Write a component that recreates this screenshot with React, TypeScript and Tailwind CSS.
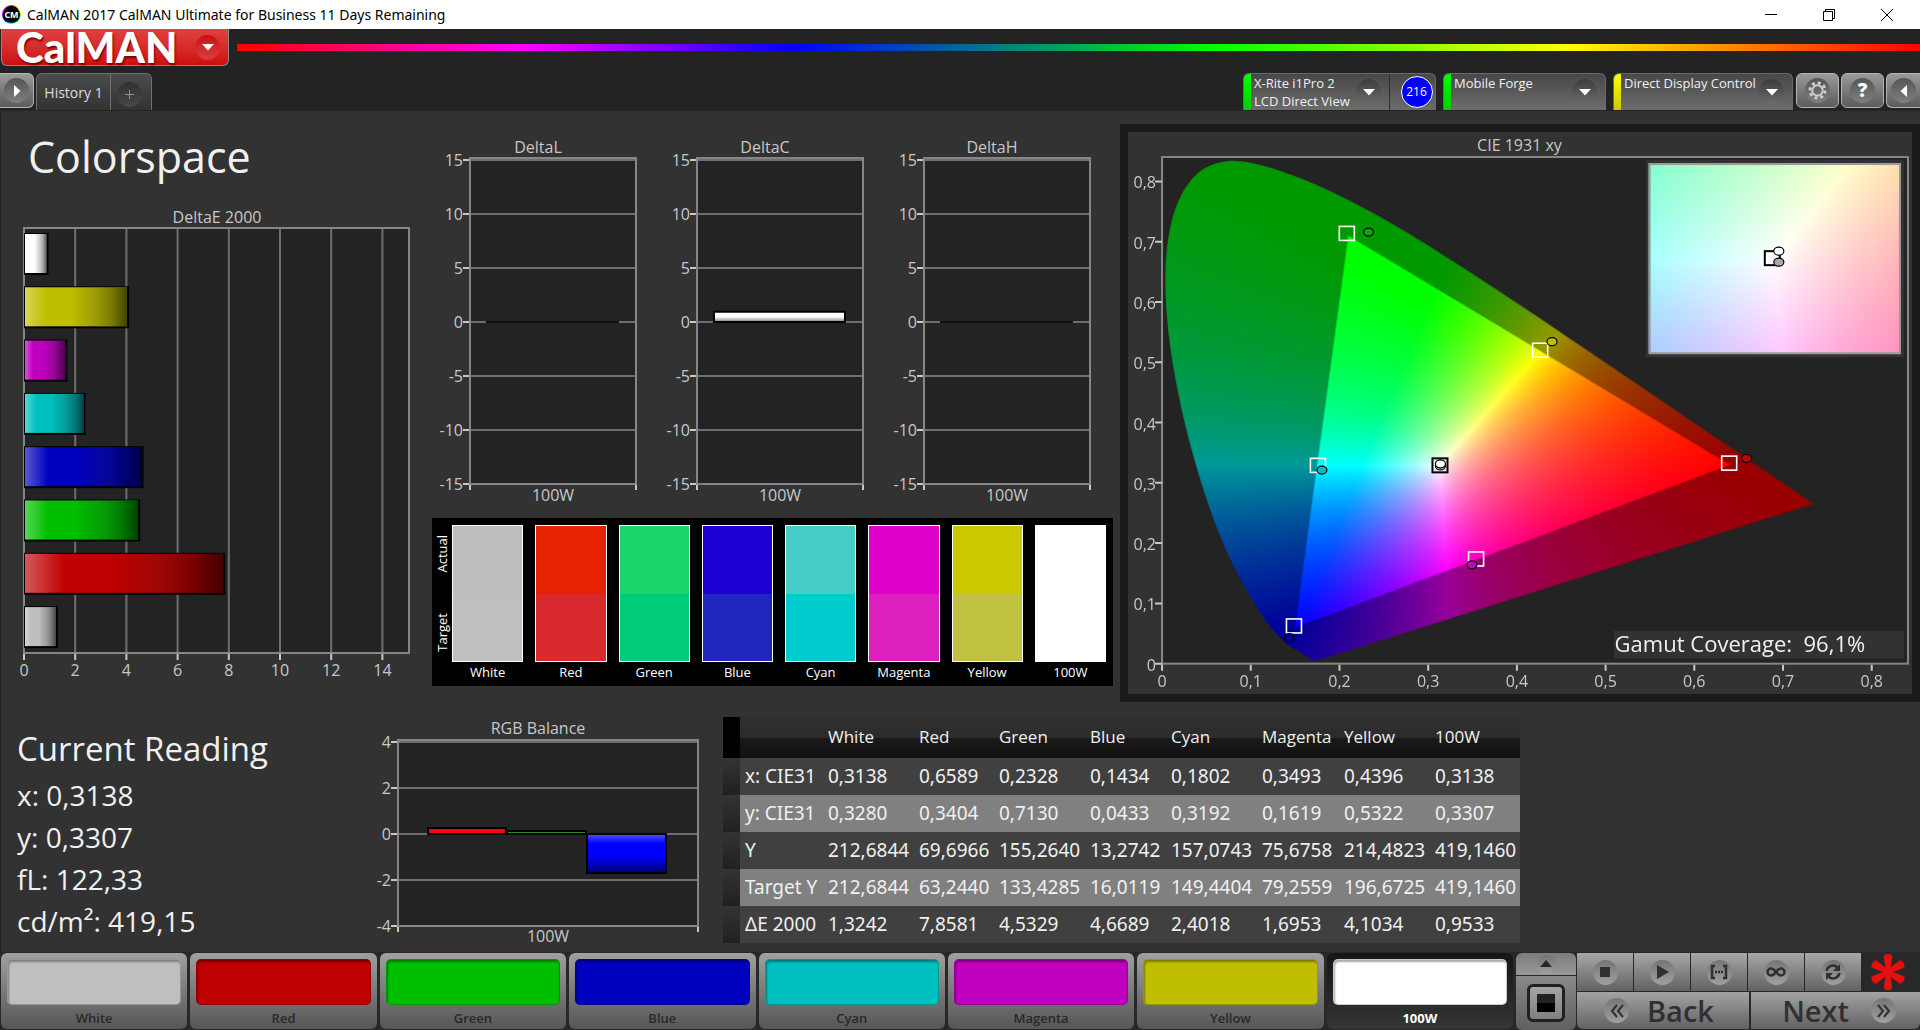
import { useEffect, useRef } from "react";
import type { ReactNode } from "react";

type Point = [number, number];

const PATCHES = [
  { name: "White", base: "#bfbfbf", actual: "#bfbdbe", target: "#bfbfbf", deltaE: 1.3242 },
  { name: "Red", base: "#bf0000", actual: "#e62200", target: "#d82830", deltaE: 7.8581 },
  { name: "Green", base: "#00bf00", actual: "#1bd76b", target: "#00cc7a", deltaE: 4.5329 },
  { name: "Blue", base: "#0000bf", actual: "#1c00d2", target: "#2126bf", deltaE: 4.6689 },
  { name: "Cyan", base: "#00bfbf", actual: "#46cdc8", target: "#00cccd", deltaE: 2.4018 },
  { name: "Magenta", base: "#bf00bf", actual: "#dc00c8", target: "#dc20c0", deltaE: 1.6953 },
  { name: "Yellow", base: "#bfbf00", actual: "#cbc800", target: "#c1c141", deltaE: 4.1034 },
  { name: "100W", base: "#ffffff", actual: "#ffffff", target: "#ffffff", deltaE: 0.9533 },
];

const ROWS = [
  ["x: CIE31", "0,3138", "0,6589", "0,2328", "0,1434", "0,1802", "0,3493", "0,4396", "0,3138"],
  ["y: CIE31", "0,3280", "0,3404", "0,7130", "0,0433", "0,3192", "0,1619", "0,5322", "0,3307"],
  ["Y", "212,6844", "69,6966", "155,2640", "13,2742", "157,0743", "75,6758", "214,4823", "419,1460"],
  ["Target Y", "212,6844", "63,2440", "133,4285", "16,0119", "149,4404", "79,2559", "196,6725", "419,1460"],
  ["ΔE 2000", "1,3242", "7,8581", "4,5329", "4,6689", "2,4018", "1,6953", "4,1034", "0,9533"],
];

const COL_WIDTHS = [17, 83, 91, 80, 91, 81, 91, 82, 91, 90];

/* ---------- chromaticity helpers ---------- */

const LOCUS: Point[] = [
  [0.1741, 0.005], [0.1714, 0.0051], [0.1689, 0.0069], [0.1644, 0.0109], [0.1566, 0.0177],
  [0.144, 0.0297], [0.1355, 0.0399], [0.1241, 0.0578], [0.1096, 0.0868], [0.0913, 0.1327],
  [0.0687, 0.2007], [0.0454, 0.295], [0.0235, 0.4127], [0.0082, 0.5384], [0.0039, 0.6548],
  [0.0139, 0.7502], [0.0389, 0.812], [0.0743, 0.8338], [0.1142, 0.8262], [0.1547, 0.8059],
  [0.1929, 0.7816], [0.2296, 0.7543], [0.2658, 0.7243], [0.3016, 0.6923], [0.3731, 0.6245],
  [0.4441, 0.5547], [0.5125, 0.4866], [0.5752, 0.4242], [0.627, 0.3725], [0.6658, 0.334],
  [0.6915, 0.3083], [0.719, 0.2809], [0.7347, 0.2653],
];

const GAMUT: Point[] = [[0.64, 0.33], [0.21, 0.71], [0.15, 0.06]];

const CIE_W = 783;
const CIE_H = 561;
const cx = (x: number) => 34 + x * 886;
const cy = (y: number) => 531 - y * 602;

// linear sRGB, brightest channel scaled to full
function xyToRgb(x: number, y: number) {
  const X = x / y;
  const Z = (1 - x - y) / y;
  const lin = [
    3.24045 * X - 1.53714 - 0.49853 * Z,
    -0.96927 * X + 1.87601 + 0.04156 * Z,
    0.05564 * X - 0.20403 + 1.05723 * Z,
  ].map((v) => Math.max(v, 0));
  const peak = Math.max(...lin);
  return lin.map((v) => (255 * v) / peak);
}

// signed distance in pixels to the nearest gamut edge, positive inside
function gamutDistance(px: number, py: number) {
  let d = Infinity;
  for (let i = 0; i < 3; i++) {
    const [ax, ay] = [cx(GAMUT[i][0]), cy(GAMUT[i][1])];
    const [bx, by] = [cx(GAMUT[(i + 1) % 3][0]), cy(GAMUT[(i + 1) % 3][1])];
    const len = Math.hypot(bx - ax, by - ay);
    d = Math.min(d, ((by - ay) * (px - ax) - (bx - ax) * (py - ay)) / len);
  }
  return d;
}

function ColorField({ width, height, paint, clip }: {
  width: number;
  height: number;
  paint: (px: number, py: number) => number[];
  clip?: string;
}) {
  const ref = useRef<HTMLCanvasElement>(null);

  useEffect(() => {
    const ctx = ref.current?.getContext("2d");
    if (!ctx) return;
    const img = ctx.createImageData(width, height);
    for (let j = 0; j < height; j++) {
      for (let i = 0; i < width; i++) {
        const [r, g, b] = paint(i + 0.5, j + 0.5);
        img.data.set([r, g, b, 255], (j * width + i) * 4);
      }
    }
    ctx.putImageData(img, 0, 0);
    if (clip) {
      ctx.globalCompositeOperation = "destination-in";
      ctx.fill(new Path2D(clip));
    }
  }, [width, height, paint, clip]);

  return <canvas ref={ref} width={width} height={height} className="block h-full w-full" />;
}

function paintDiagram(px: number, py: number) {
  const x = (px - 34) / 886;
  const y = Math.max((531 - py) / 602, 0.001);
  const k = 0.6 + 0.4 * Math.min(Math.max(gamutDistance(px, py) + 0.5, 0), 1);
  return xyToRgb(x, y).map((v) => v * k);
}

function paintInset(px: number, py: number) {
  const x = 0.3127 + ((px - 126) / 125) * 0.025;
  const y = 0.329 - ((py - 95) / 95) * 0.025;
  return xyToRgb(x, y);
}

// Catmull-Rom spline through the spectral locus
function locusPath() {
  const p = LOCUS.map(([x, y]): Point => [cx(x), cy(y)]);
  let d = `M${p[0]}`;
  for (let i = 0; i < p.length - 1; i++) {
    const a = p[i - 1] ?? p[i];
    const b = p[i];
    const c = p[i + 1];
    const e = p[i + 2] ?? c;
    d += `C${b[0] + (c[0] - a[0]) / 6},${b[1] + (c[1] - a[1]) / 6} ${c[0] - (e[0] - b[0]) / 6},${c[1] - (e[1] - b[1]) / 6} ${c[0]},${c[1]}`;
  }
  return d + "Z";
}

const LOCUS_PATH = locusPath();

/* ---------- charts ---------- */

function DeltaEChart() {
  const bars = [...PATCHES].reverse();
  return (
    <svg viewBox="0 0 425 490" className="block w-full text-[16px]" role="img" aria-label="DeltaE 2000">
      <defs>
        <linearGradient id="shadeH">
          <stop offset="0" stopColor="#fff" stopOpacity="0.35" />
          <stop offset="0.2" stopColor="#fff" stopOpacity="0" />
          <stop offset="0.45" stopColor="#000" stopOpacity="0" />
          <stop offset="0.65" stopColor="#222" stopOpacity="0.18" />
          <stop offset="0.85" stopColor="#000" stopOpacity="0.36" />
          <stop offset="1" stopColor="#000" stopOpacity="0.65" />
        </linearGradient>
      </defs>
      <text x="217" y="23" textAnchor="middle" className="fill-[#c8c8c8]">DeltaE 2000</text>
      <rect x="24" y="28" width="385" height="425" fill="#232323" />
      {[2, 4, 6, 8, 10, 12, 14].map((n) => (
        <path key={n} d={`M${24 + n * 25.6} 28V453`} stroke="#6e6e6e" strokeWidth="2" />
      ))}
      <rect x="24" y="28" width="385" height="425" fill="none" stroke="#868686" strokeWidth="2" />
      {bars.map((bar, i) => (
        <g key={bar.name}>
          <rect x="24" y={33 + i * 53.3} width={bar.deltaE * 25.6} height="42" fill="#000" />
          <rect x="25" y={34 + i * 53.3} width={bar.deltaE * 25.6 - 3} height="39" fill={bar.base} />
          <rect x="25" y={34 + i * 53.3} width={bar.deltaE * 25.6 - 3} height="39" fill="url(#shadeH)" />
        </g>
      ))}
      {[0, 2, 4, 6, 8, 10, 12, 14].map((n) => (
        <g key={n}>
          <path d={`M${24 + n * 25.6} 454v6`} stroke="#c8c8c8" strokeWidth="2" />
          <text x={24 + n * 25.6} y="476" textAnchor="middle" className="fill-[#c8c8c8]">{n}</text>
        </g>
      ))}
    </svg>
  );
}

function DeltaChart({ title, value }: { title: string; value: number }) {
  const zero = 192;
  return (
    <svg viewBox="0 0 227 380" className="block min-w-0 flex-1 text-[16px]" role="img" aria-label={title}>
      <defs>
        <linearGradient id="shadeV" x2="0" y2="1">
          <stop offset="0" stopColor="#fff" />
          <stop offset="0.5" stopColor="#fff" />
          <stop offset="1" stopColor="#777" />
        </linearGradient>
      </defs>
      <text x="113" y="23" textAnchor="middle" className="fill-[#c8c8c8]">{title}</text>
      <rect x="45" y="28" width="166" height="326" fill="#232323" />
      {[15, 10, 5, 0, -5, -10, -15].map((n) => (
        <g key={n}>
          <path d={`M45 ${zero - n * 10.8}H211`} stroke="#6e6e6e" strokeWidth="2" />
          <path d={`M38 ${zero - n * 10.8}h7`} stroke="#c8c8c8" strokeWidth="2" />
          <text x="38" y={zero - n * 10.8 + 6} textAnchor="end" className="fill-[#c8c8c8]">{n}</text>
        </g>
      ))}
      <rect x="45" y="28" width="166" height="326" fill="none" stroke="#868686" strokeWidth="2" />
      <path d="M45 355v5M211 355v5" stroke="#c8c8c8" strokeWidth="2" />
      {value > 0 ? (
        <rect x="62" y={zero - value * 10.8} width="131" height={value * 10.8} fill="url(#shadeV)" stroke="#000" strokeWidth="2" />
      ) : (
        <path d={`M61 ${zero}h133`} stroke="#111" strokeWidth="2" />
      )}
      <text x="128" y="371" textAnchor="middle" className="fill-[#c8c8c8]">100W</text>
    </svg>
  );
}

function RgbBalanceChart() {
  return (
    <svg viewBox="0 0 340 234" className="block w-full text-[16px]" role="img" aria-label="RGB Balance">
      <defs>
        <linearGradient id="shadeBlue" x2="0" y2="1">
          <stop offset="0" stopColor="#5050ff" />
          <stop offset="0.25" stopColor="#0000ff" />
          <stop offset="0.55" stopColor="#0000ff" />
          <stop offset="1" stopColor="#000078" />
        </linearGradient>
      </defs>
      <text x="168" y="18" textAnchor="middle" className="fill-[#c8c8c8]">RGB Balance</text>
      <rect x="28" y="24" width="300" height="186" fill="#232323" />
      {[4, 2, 0, -2, -4].map((n) => (
        <g key={n}>
          <path d={`M28 ${118 - n * 23}H328`} stroke="#6e6e6e" strokeWidth="2" />
          <path d={`M21 ${118 - n * 23}h7`} stroke="#c8c8c8" strokeWidth="2" />
          <text x="21" y={118 - n * 23 + 6} textAnchor="end" className="fill-[#c8c8c8]">{n}</text>
        </g>
      ))}
      <rect x="28" y="24" width="300" height="186" fill="none" stroke="#868686" strokeWidth="2" />
      <path d="M28 211v5M328 211v5" stroke="#c8c8c8" strokeWidth="2" />
      <rect x="58" y="112" width="78" height="6" fill="#ee0a0a" stroke="#000" strokeWidth="2" />
      <rect x="137" y="115" width="79" height="3" fill="#2a8a2a" stroke="#000" strokeWidth="2" />
      <rect x="217" y="118" width="79" height="39" fill="url(#shadeBlue)" stroke="#000" strokeWidth="2" />
      <text x="178" y="226" textAnchor="middle" className="fill-[#c8c8c8]">100W</text>
    </svg>
  );
}

const TARGETS: Point[] = [
  [0.2083, 0.7138], [0.1757, 0.329], [0.354, 0.1737], [0.1487, 0.0626], [0.4262, 0.52], [0.6393, 0.3327],
];

const MEASURED: [number, number, string][] = [
  [0.6589, 0.3404, "#bf0000"], [0.2328, 0.716, "#00a800"], [0.1434, 0.0433, "#0000a0"],
  [0.1802, 0.3212, "#00bfbf"], [0.3493, 0.1639, "#bf00bf"], [0.4396, 0.5342, "#bfbf00"],
  [0.3138, 0.328, "#bfbfbf"], [0.3138, 0.3315, "#ffffff"],
];

const TICKS = [0, 1, 2, 3, 4, 5, 6, 7, 8];

function CieChart() {
  return (
    <svg viewBox={`0 0 ${CIE_W} ${CIE_H}`} className="block w-full text-[16px]" role="img" aria-label="CIE 1931 xy">
      <text x="391" y="19" textAnchor="middle" className="fill-[#c8c8c8]">CIE 1931 xy</text>
      <rect x="34" y="25" width="745" height="506" fill="#232323" />
      <foreignObject x="0" y="0" width={CIE_W} height={CIE_H}>
        <ColorField width={CIE_W} height={CIE_H} paint={paintDiagram} clip={LOCUS_PATH} />
      </foreignObject>
      <rect x="34" y="25" width="745" height="506" fill="none" stroke="#868686" strokeWidth="2" />
      {TICKS.map((n) => (
        <g key={n}>
          <path d={`M${cx(n / 10)} 532v6M27 ${cy(n / 10)}h7`} stroke="#c8c8c8" strokeWidth="2" />
          <text x={cx(n / 10)} y="554" textAnchor="middle" className="fill-[#c8c8c8]">{n ? `0,${n}` : "0"}</text>
          <text x="28" y={cy(n / 10) + 7} textAnchor="end" className="fill-[#c8c8c8]">{n ? `0,${n}` : "0"}</text>
        </g>
      ))}
      {TARGETS.map(([x, y]) => (
        <rect key={x} x={cx(x) - 7.5} y={cy(y) - 7} width="15" height="14" fill="none" stroke="#fff" strokeWidth="1.6" />
      ))}
      <rect x={cx(0.3133) - 7.5} y={cy(0.329) - 7} width="15" height="14" fill="none" stroke="#000" strokeWidth="2" />
      {MEASURED.map(([x, y, fill]) => (
        <ellipse key={`${x}${fill}`} cx={cx(x)} cy={cy(y)} rx="5" ry="4" fill={fill} stroke="#000" strokeWidth="1.2" />
      ))}

      {/* zoomed view around the white point */}
      <rect x="517" y="28" width="258" height="197" fill="#323232" />
      <foreignObject x="520" y="31" width="252" height="190">
        <ColorField width={252} height={190} paint={paintInset} />
      </foreignObject>
      <rect x="521" y="32" width="250" height="189" fill="none" stroke="#999" strokeWidth="2" />
      <rect x="636" y="119" width="15" height="14" fill="none" stroke="#000" strokeWidth="2" />
      <ellipse cx="650" cy="130" rx="5" ry="4" fill="#a8a8a8" stroke="#000" strokeWidth="1.2" />
      <ellipse cx="650" cy="119" rx="5" ry="4" fill="#fff" stroke="#000" strokeWidth="1.2" />

      <rect x="485" y="498" width="290" height="28" fill="#323232" />
      <text x="486" y="519" xmlSpace="preserve" className="fill-[#f0f0f0] text-[22px]">Gamut Coverage:  96,1%</text>
    </svg>
  );
}

/* ---------- chrome ---------- */

function RoundGlyph({ children, className = "" }: { children: ReactNode; className?: string }) {
  return (
    <span className={`flex h-[25px] w-[25px] shrink-0 items-center justify-center rounded-full ${className}`}>
      {children}
    </span>
  );
}

function Arrow({ d }: { d: string }) {
  return (
    <svg viewBox="0 0 12 12" className="h-3 w-3 fill-white">
      <path d={d} />
    </svg>
  );
}

const DOWN = "M0 3H12L6 9.500Z";
const RIGHT = "M3 0V12L9.500 6Z";
const LEFT = "M9 0V12L2.500 6Z";

function DeviceTab({ lines, accent, width, badge }: { lines: string[]; accent: string; width: string; badge?: string }) {
  return (
    <div className={`flex h-[37px] overflow-hidden rounded-t-md border border-b-0 border-[#6a6a6a] bg-gradient-to-b from-[#484848] to-[#6c6c6c] ${width}`}>
      <div className={`w-[7px] shrink-0 ${accent}`} />
      <button type="button" className="flex min-w-0 flex-1 items-start pr-2 pl-[3px] text-left text-[13px] leading-[18px] whitespace-nowrap text-[#f0f0f0]">
        <span className="w-0 flex-1">
          {lines.map((line) => (
            <span key={line} className="block">{line}</span>
          ))}
        </span>
        <RoundGlyph className="mt-[5px] bg-gradient-to-b from-[#3c3c3c] to-[#6c6c6c]">
          <Arrow d={DOWN} />
        </RoundGlyph>
      </button>
      {badge && (
        <div className="flex w-[46px] items-center justify-center border-l border-[#303030] pl-2">
          <span className="flex h-8 w-8 items-center justify-center rounded-full border border-white bg-[#0000ff] text-[12px] text-white">
            {badge}
          </span>
        </div>
      )}
    </div>
  );
}

function SquareButton({ label, children, className = "" }: { label: string; children: ReactNode; className?: string }) {
  return (
    <button type="button" aria-label={label} className={`flex h-[35px] items-center justify-center rounded-md border border-[#b4b4b4] bg-gradient-to-b from-[#9a9a9a] to-[#5c5c5c] ${className}`}>
      <RoundGlyph className="bg-gradient-to-b from-[#555] to-[#808080]">{children}</RoundGlyph>
    </button>
  );
}

function TitleBar() {
  return (
    <div className="flex h-[29px] items-center bg-white pr-1 text-black">
      <span className="ml-[2px] flex h-[19px] w-[19px] items-center justify-center rounded-full bg-[conic-gradient(red,yellow,lime,cyan,blue,magenta,red)] p-px">
        <span className="flex h-full w-full items-center justify-center rounded-full bg-black text-[9px] font-bold text-white">CM</span>
      </span>
      <h1 className="ml-[6px] flex-1 font-['Noto_Sans',sans-serif] text-[14px]">
        CalMAN 2017 CalMAN Ultimate for Business 11 Days Remaining
      </h1>
      <button type="button" aria-label="Minimize" className="flex w-[58px] justify-center">
        <svg viewBox="0 0 12 12" className="h-3 w-3" stroke="#000"><path d="M0 5.500H12" /></svg>
      </button>
      <button type="button" aria-label="Restore" className="flex w-[58px] justify-center">
        <svg viewBox="0 0 12 12" className="h-3 w-3" fill="none" stroke="#000"><path d="M.5 2.500h9v9h-9zM2.500 2.500v-2h9v9h-2" /></svg>
      </button>
      <button type="button" aria-label="Close" className="flex w-[58px] justify-center">
        <svg viewBox="0 0 12 12" className="h-3 w-3" stroke="#000"><path d="M0 0L12 12M12 0L0 12" /></svg>
      </button>
    </div>
  );
}

function Header() {
  return (
    <header className="bg-[#232323]">
      <div className="flex items-start">
        <button type="button" className="ml-px flex h-[37px] w-[228px] items-center rounded-b-md border border-t-0 border-[#8a8a8a] bg-gradient-to-b from-[#e04040] to-[#cc0c0c] pl-[14px]">
          <span className="flex-1 text-left font-[Lato,sans-serif] text-[42px] leading-[36px] font-black text-white [text-shadow:1px_2px_2px_#7a0000]">
            CalMAN
          </span>
          <RoundGlyph className="mr-2 bg-gradient-to-b from-[#c80c18] to-[#dc3c3c]">
            <Arrow d={DOWN} />
          </RoundGlyph>
        </button>
        <div className="mt-[15px] ml-2 h-[7px] flex-1 bg-[linear-gradient(to_right,#f00,#f0f_17%,#00f_33%,#0f0_58%,#ff0_79%,#f00)]" />
      </div>
      <div className="mt-[7px] flex h-[38px] items-start">
        <SquareButton label="Expand" className="w-[34px] rounded-l-none border-l-0">
          <Arrow d={RIGHT} />
        </SquareButton>
        <div className="ml-[2px] flex h-[37px] rounded-t-md border border-b-0 border-[#707070] bg-gradient-to-b from-[#4c4c4c] to-[#323232] text-[14px] text-[#dcdcdc]">
          <button type="button" className="w-[73px]">History 1</button>
          <button type="button" aria-label="Add history" className="flex w-[41px] items-center border-l border-[#707070] pt-1 pl-[6px]">
            <RoundGlyph className="bg-gradient-to-b from-[#303030] to-[#484848]">
              <svg viewBox="0 0 9 9" className="h-[9px] w-[9px]" stroke="#909090"><path d="M4.500 0V9M0 4.500H9" /></svg>
            </RoundGlyph>
          </button>
        </div>
        <div className="flex flex-1 justify-end">
          <DeviceTab lines={["X-Rite i1Pro 2", "LCD Direct View"]} accent="bg-gradient-to-b from-[#00ff00] to-[#00d000]" width="w-[193px]" badge="216" />
          <div className="ml-[7px]" />
          <DeviceTab lines={["Mobile Forge"]} accent="bg-gradient-to-b from-[#00ff00] to-[#00d000]" width="w-[163px]" />
          <div className="ml-[7px]" />
          <DeviceTab lines={["Direct Display Control"]} accent="bg-gradient-to-b from-[#ffff00] to-[#d0c800]" width="w-[180px]" />
          <SquareButton label="Settings" className="ml-[3px] w-[43px]">
            <svg viewBox="0 0 20 20" className="h-[19px] w-[19px]" fill="none" stroke="#d0d0d0">
              <circle cx="10" cy="10" r="5.500" strokeWidth="2" />
              <circle cx="10" cy="10" r="8" strokeWidth="3" strokeDasharray="3.140 3.143" />
            </svg>
          </SquareButton>
          <SquareButton label="Help" className="ml-[2px] w-[43px]">
            <span className="text-[19px] leading-none font-extrabold text-white">?</span>
          </SquareButton>
          <SquareButton label="Collapse" className="ml-[2px] w-[34px] rounded-r-none border-r-0">
            <Arrow d={LEFT} />
          </SquareButton>
        </div>
      </div>
    </header>
  );
}

function SwatchPanel() {
  return (
    <div className="mr-[7px] ml-[7px] flex h-[168px] bg-black pt-[7px] pr-[7px]">
      <div className="flex h-[137px] w-5 flex-col items-center justify-between py-[10px] text-[13px] leading-5 text-white">
        <span className="rotate-180 [writing-mode:vertical-rl]">Actual</span>
        <span className="rotate-180 [writing-mode:vertical-rl]">Target</span>
      </div>
      <div className="grid flex-1 grid-cols-8 gap-3">
        {PATCHES.map((p) => (
          <div key={p.name} className="flex flex-col items-center">
            <div className="flex h-[137px] w-full flex-col border border-white">
              <div className="flex-1" style={{ backgroundColor: p.actual }} />
              <div className="flex-1" style={{ backgroundColor: p.target }} />
            </div>
            <span className="text-[13px] leading-5 text-white">{p.name}</span>
          </div>
        ))}
      </div>
    </div>
  );
}

function ReadingsTable() {
  return (
    <table className="mt-px ml-[13px] w-[797px] table-fixed border-collapse text-left font-['Noto_Sans',sans-serif] text-[19px] text-[#f0f0f0]">
      <colgroup>
        {COL_WIDTHS.map((w, i) => (
          <col key={i} style={{ width: w }} />
        ))}
      </colgroup>
      <thead>
        <tr className="h-[41px] bg-[linear-gradient(#303030,#2b2b2b_50%,#1a1a1a_50%,#111)] font-['Open_Sans',sans-serif] text-[17px]">
          <td className="bg-black" />
          <td />
          {PATCHES.map((p) => (
            <th key={p.name} scope="col" className="pl-[5px] font-normal">{p.name}</th>
          ))}
        </tr>
      </thead>
      <tbody>
        {ROWS.map((row) => (
          <tr key={row[0]} className="h-[37px] bg-[#404040] even:bg-[#808080]">
            <td className="bg-gradient-to-b from-[#343434] to-[#202020]" />
            {row.map((cell, i) =>
              i === 0 ? (
                <th key={i} scope="row" className="p-0 pl-[5px] font-normal whitespace-nowrap">{cell}</th>
              ) : (
                <td key={i} className="p-0 pl-[5px]">{cell}</td>
              ),
            )}
          </tr>
        ))}
      </tbody>
    </table>
  );
}

function TransportButton({ label, children }: { label: string; children: ReactNode }) {
  return (
    <button type="button" aria-label={label} className="flex h-[38px] w-[56px] items-center justify-center bg-gradient-to-b from-[#a8a8a8] to-[#626262]">
      <RoundGlyph className="bg-gradient-to-b from-[#757575] to-[#a0a0a0]">
        <svg viewBox="0 0 20 20" className="h-5 w-5" fill="none" stroke="#303030" strokeWidth="2.500">{children}</svg>
      </RoundGlyph>
    </button>
  );
}

function Footer() {
  return (
    <footer className="flex h-[78px] bg-[#282828] pt-px">
      <div className="flex flex-1 gap-[3px] pr-[3px] pl-px">
        {PATCHES.map((p, i) => {
          const active = i === PATCHES.length - 1;
          return (
            <button
              key={p.name}
              type="button"
              aria-pressed={active}
              className={`flex h-[76px] flex-1 flex-col items-center rounded-md px-[6px] pt-[6px] ${active ? "bg-gradient-to-b from-[#161616] to-[#363636] font-bold text-white" : "bg-gradient-to-b from-[#a0a0a0] to-[#565656] font-semibold text-[#282828]"}`}
            >
              <span className="h-[46px] w-full rounded-[5px] border border-black/20 shadow-[inset_1px_2px_2px_rgba(0,0,0,0.35)]" style={{ backgroundColor: p.base }} />
              <span className="mt-[3px] text-[13px] leading-5">{p.name}</span>
            </button>
          );
        })}
      </div>
      <div className="flex w-[60px] flex-col gap-px">
        <button type="button" aria-label="Expand panel" className="flex h-[22px] items-center justify-center rounded-t-md bg-gradient-to-b from-[#7c7c7c] to-[#989898]">
          <span className="flex h-[19px] w-[19px] items-center justify-center rounded-full bg-gradient-to-b from-[#727272] to-[#a0a0a0]">
            <svg viewBox="0 0 12 8" className="h-2 w-3 fill-[#282828]"><path d="M0 7H12L6 0Z" /></svg>
          </span>
        </button>
        <button type="button" aria-label="Current patch" className="flex flex-1 items-center justify-center rounded-b-md bg-gradient-to-b from-[#8a8a8a] to-[#606060]">
          <span className="flex h-[38px] w-[38px] items-center justify-center rounded-md border-3 border-[#202020] bg-gradient-to-b from-[#a4a4a4] to-[#808080]">
            <span className="h-[18px] w-[18px] bg-[linear-gradient(#222_50%,#000_50%)]" />
          </span>
        </button>
      </div>
      <div className="ml-px flex w-[343px] flex-col gap-px">
        <div className="flex gap-px">
          <TransportButton label="Stop"><path d="M5 5H15V15H5Z" fill="#303030" stroke="none" /></TransportButton>
          <TransportButton label="Play"><path d="M5 3V17L17 10Z" fill="#303030" stroke="none" /></TransportButton>
          <TransportButton label="Read range"><path d="M6 4H3V16H6M14 4H17V16H14M6 10h2m1 0h2m1 0h2" /></TransportButton>
          <TransportButton label="Continuous">
            <path d="M10 10C8 7 6.500 6.500 5 6.500A3.500 3.500 0 0 0 5 13.500C6.500 13.500 8 13 10 10S13.500 6.500 15 6.500A3.500 3.500 0 0 1 15 13.500C13.500 13.500 12 13 10 10Z" />
          </TransportButton>
          <TransportButton label="Repeat">
            <path d="M3.500 9A6.500 6.500 0 0 1 14.500 5.500M16.500 11A6.500 6.500 0 0 1 5.500 14.500" />
            <path d="M17 2V9H10ZM3 18V11H10Z" fill="#303030" stroke="none" />
          </TransportButton>
          <svg viewBox="-20 -20 40 40" className="ml-[7px] h-[38px] w-[38px] fill-[#e60f0f]">
            {[0, 60, 120, 180, 240, 300].map((a) => (
              <path key={a} transform={`rotate(${a})`} d="M-2 0L-4.500 -16Q-4.500 -19 0 -19T4.500 -16L2 0Z" />
            ))}
          </svg>
        </div>
        <div className="flex gap-[2px] text-[29px] leading-none font-semibold text-[#303030]">
          <button type="button" className="flex h-[37px] flex-1 items-center rounded-bl-md bg-gradient-to-b from-[#a4a4a4] to-[#626262] pl-[27px]">
            <RoundGlyph className="bg-gradient-to-b from-[#757575] to-[#a0a0a0]">
              <svg viewBox="0 0 14 14" className="h-[14px] w-[14px]" fill="none" stroke="#303030" strokeWidth="2"><path d="M7 1L2 7L7 13M13 1L8 7L13 13" /></svg>
            </RoundGlyph>
            <span className="ml-[18px]">Back</span>
          </button>
          <button type="button" className="flex h-[37px] flex-1 items-center justify-end rounded-br-md bg-gradient-to-b from-[#a4a4a4] to-[#626262] pr-6">
            <span className="mr-[22px]">Next</span>
            <RoundGlyph className="bg-gradient-to-b from-[#757575] to-[#a0a0a0]">
              <svg viewBox="0 0 14 14" className="h-[14px] w-[14px]" fill="none" stroke="#303030" strokeWidth="2"><path d="M1 1L6 7L1 13M7 1L12 7L7 13" /></svg>
            </RoundGlyph>
          </button>
        </div>
      </div>
    </footer>
  );
}

export default function App() {
  return (
    <div className="flex min-h-screen flex-col bg-[#323232] font-['Open_Sans','Noto_Sans',sans-serif]">
      <TitleBar />
      <Header />
      <main className="flex-1 shadow-[inset_1px_0_0_#242424]">
        <div className="grid grid-cols-[425fr_695fr_800fr]">
          <section>
            <h2 className="h-[89px] pt-4 pl-7 text-[43px] leading-[60px] text-[#f0f0f0]">Colorspace</h2>
            <DeltaEChart />
          </section>
          <section className="pt-[19px]">
            <div className="mb-2 flex pr-[14px]">
              <DeltaChart title="DeltaL" value={0} />
              <DeltaChart title="DeltaC" value={0.95} />
              <DeltaChart title="DeltaH" value={0} />
            </div>
            <SwatchPanel />
          </section>
          <section className="pt-[13px]">
            <div className="border-8 border-[#1a1a1a] bg-[#323232]">
              <CieChart />
            </div>
          </section>
        </div>
        <div className="mt-[14px] grid grid-cols-[370fr_340fr_1210fr]">
          <section className="pt-2 pl-[17px] text-[#f0f0f0]">
            <h2 className="text-[33px] leading-[50px]">Current Reading</h2>
            <div className="text-[28px] leading-[42px]">
              <p>x: 0,3138</p>
              <p>y: 0,3307</p>
              <p>fL: 122,33</p>
              <p>cd/m²: 419,15</p>
            </div>
          </section>
          <RgbBalanceChart />
          <div>
            <ReadingsTable />
          </div>
        </div>
      </main>
      <Footer />
    </div>
  );
}
